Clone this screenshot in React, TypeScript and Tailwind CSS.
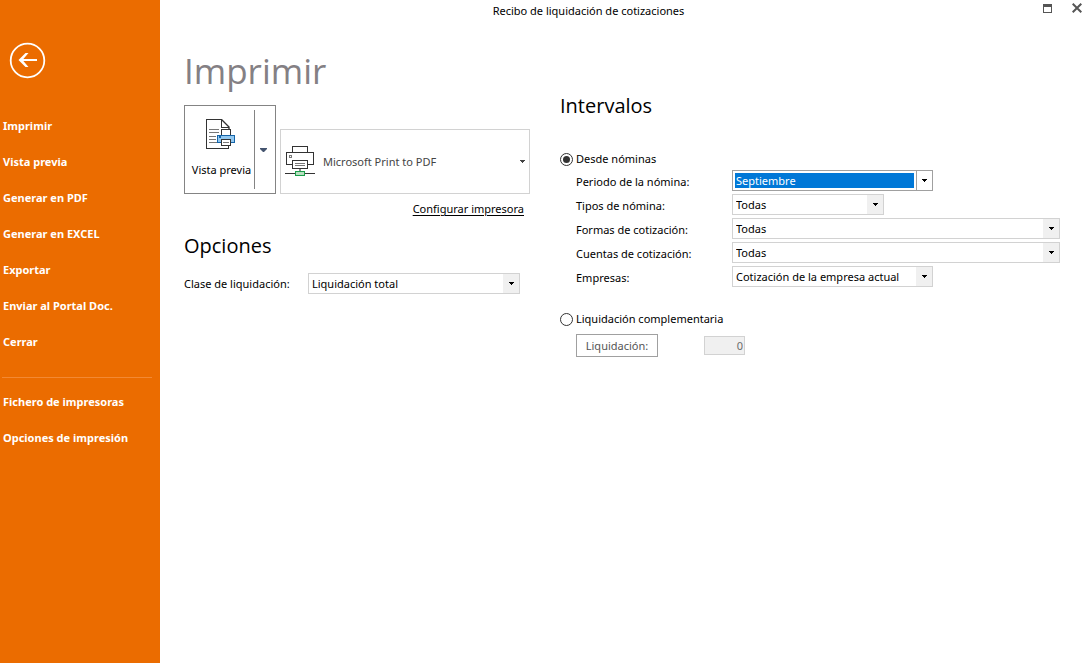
import { useState } from 'react';
import type { ReactNode } from 'react';

const mainActions = [
  'Imprimir',
  'Vista previa',
  'Generar en PDF',
  'Generar en EXCEL',
  'Exportar',
  'Enviar al Portal Doc.',
  'Cerrar',
];

const settingsActions = ['Fichero de impresoras', 'Opciones de impresión'];

function Caret({ className = 'text-black' }: { className?: string }) {
  return (
    <svg
      className={className}
      width="5"
      height="3"
      viewBox="0 0 5 3"
      fill="currentColor"
      shapeRendering="crispEdges"
      aria-hidden="true"
    >
      <path d="M0 0h5v1H4v1H3v1H2V2H1V1H0z" />
    </svg>
  );
}

function SideButton({ children }: { children: ReactNode }) {
  return (
    <button
      type="button"
      className="flex h-9 w-full items-center px-[3px] text-left font-bold text-white"
    >
      {children}
    </button>
  );
}

interface SelectBoxProps {
  id: string;
  options: string[];
  width: string;
  active?: boolean;
}

function SelectBox({ id, options, width, active = false }: SelectBoxProps) {
  const [value, setValue] = useState(options[0]);

  return (
    <div
      className={`relative flex h-[21px] border bg-white ${width} ${
        active ? 'border-[#a0a0a0] p-0.5' : 'border-[#d2d2d2]'
      }`}
    >
      <select
        id={id}
        value={value}
        onChange={(e) => setValue(e.target.value)}
        className={`min-w-0 flex-1 appearance-none border-r-[16px] border-transparent bg-clip-padding outline-none ${
          active ? 'bg-[#0078d7] pl-px text-white' : 'pt-px pl-[3px] text-black'
        }`}
      >
        {options.map((o) => (
          <option key={o}>{o}</option>
        ))}
      </select>
      <span
        className={`pointer-events-none absolute inset-y-0 right-0 flex w-4 items-center justify-center ${
          active ? 'border-l border-[#a0a0a0] bg-white' : 'bg-[#f0f0f0]'
        }`}
      >
        <Caret />
      </span>
    </div>
  );
}

function Field({ label, ...select }: SelectBoxProps & { label: string }) {
  return (
    <div className="flex h-6 items-start">
      <label htmlFor={select.id} className="w-[156px] shrink-0 leading-6">
        {label}
      </label>
      <SelectBox {...select} />
    </div>
  );
}

function ModeRadio({
  label,
  checked,
  onSelect,
}: {
  label: string;
  checked: boolean;
  onSelect: () => void;
}) {
  return (
    <label className="flex h-5 items-center gap-[3px]">
      <input
        type="radio"
        name="modo"
        checked={checked}
        onChange={onSelect}
        className="size-[13px] appearance-none rounded-full border border-[#333333] bg-white bg-clip-content p-0.5 checked:bg-[#333333]"
      />
      {label}
    </label>
  );
}

function PreviewIcon() {
  return (
    <svg width="30" height="31" viewBox="0 0 30 31" fill="none" shapeRendering="crispEdges">
      <path d="M16.5 1.5h-15v29h22v-3" fill="#fff" stroke="#333" />
      <path d="M16.5 1.5v8h7" stroke="#333" />
      <path d="M16.5 1.5l7.5 7.5v2" stroke="#333" strokeWidth="1.4" shapeRendering="auto" />
      <path d="M4 11.5h10M4 14.5h10M4 18.5h7M4 21.5h7M4 24.5h8" stroke="#777" />
      <path d="M16.5 11.5h9v6h-9z" fill="#fff" stroke="#333" />
      <path d="M12.5 17.5h17v7h-17z" fill="#92c8f0" stroke="#1464a8" />
      <path d="M14 18h2v2h-2z" fill="#1464a8" />
      <path d="M16.5 21.5h9v6h-9z" fill="#fff" stroke="#333" />
      <path d="M18 24.5h6" stroke="#777" />
    </svg>
  );
}

function PrinterIcon() {
  return (
    <svg width="30" height="31" viewBox="0 0 30 31" fill="none" shapeRendering="crispEdges">
      <path d="M7.5.5h15v6h-15z" fill="#fff" stroke="#333" />
      <path d="M1.5 6.5h27v12h-27z" fill="#fff" stroke="#333" />
      <path d="M4.5 9.5h2v2h-2z" stroke="#777" />
      <path d="M7.5 14.5h15v8h-15z" fill="#fff" stroke="#333" />
      <path d="M10 17.5h10M10 19.5h10" stroke="#777" />
      <path d="M0 27.5h30" stroke="#333" />
      <path d="M15 23v2" stroke="#888" strokeWidth="2" />
      <path d="M10.5 25.5h9v4h-9z" fill="#b8e0c0" stroke="#1b9e4b" />
    </svg>
  );
}

function Sidebar() {
  return (
    <aside className="w-40 shrink-0 bg-[#eb6c00] pt-[42px]">
      <button type="button" aria-label="Volver" className="ml-[9px] block">
        <svg width="37" height="37" viewBox="0 0 37 37" fill="none" stroke="#fff">
          <circle cx="18.5" cy="18.5" r="16.8" strokeWidth="1.8" />
          <path d="M28 18H11" strokeWidth="2" />
          <path d="M9.5 18l7-7h3l-6 7 6 7h-3z" fill="#fff" stroke="none" />
        </svg>
      </button>
      <nav className="mt-[29px]">
        {mainActions.map((a) => (
          <SideButton key={a}>{a}</SideButton>
        ))}
        <hr className="mt-[17px] mr-2 mb-1.5 ml-0.5 border-[#f38933]" />
        {settingsActions.map((a) => (
          <SideButton key={a}>{a}</SideButton>
        ))}
      </nav>
    </aside>
  );
}

function TitleBar() {
  return (
    <header className="flex h-[22px] items-start">
      <h1 className="flex-1 pt-[3px] text-center">Recibo de liquidación de cotizaciones</h1>
      <div className="flex h-4 w-[72px] items-center gap-5 pl-[26px]">
        <button type="button" aria-label="Maximizar">
          <svg width="9" height="9" viewBox="0 0 9 9" fill="none" shapeRendering="crispEdges">
            <path d="M.5.5h8v8h-8z" stroke="#555" />
            <path d="M0 0h9v3H0z" fill="#555" />
          </svg>
        </button>
        <button type="button" aria-label="Cerrar ventana">
          <svg width="10" height="10" viewBox="0 0 10 10" stroke="#555" strokeWidth="2">
            <path d="M.7.7l8.6 8.6M9.3.7L.7 9.3" />
          </svg>
        </button>
      </div>
    </header>
  );
}

function PrintPanel() {
  return (
    <section className="w-[346px] shrink-0">
      <h2 className="pt-6 font-['Open_Sans',sans-serif] text-[35px] leading-[50px] text-[#848084]">
        Imprimir
      </h2>
      <div className="mt-[9px] flex items-end gap-1">
        <div className="flex h-[89px] w-[92px] shrink-0 border border-[#848484]">
          <button
            type="button"
            className="my-1 flex w-[70px] flex-col items-center gap-[13px] border-r border-[#848484] pt-2 whitespace-nowrap"
          >
            <PreviewIcon />
            <span className="pl-1">Vista previa</span>
          </button>
          <button
            type="button"
            aria-label="Más opciones de vista previa"
            className="flex w-[17px] items-center justify-center"
          >
            <svg width="7" height="4" viewBox="0 0 7 4" fill="#44546f" aria-hidden="true">
              <path d="M0 0h7v1L4 4H3L0 1z" />
            </svg>
          </button>
        </div>
        <button
          type="button"
          className="flex h-[65px] flex-1 items-center border border-[#d2d2d2] px-1 text-[#444444]"
        >
          <PrinterIcon />
          <span className="ml-2 flex-1 text-left">Microsoft Print to PDF</span>
          <Caret className="text-[#444444]" />
        </button>
      </div>
      <div className="mt-[7px] pr-1.5 text-right">
        <a href="#configurar" className="underline underline-offset-2">
          Configurar impresora
        </a>
      </div>
      <h2 className="mt-[15px] font-['Open_Sans',sans-serif] text-[20px] leading-7">Opciones</h2>
      <div className="mt-[13px] flex items-center">
        <label htmlFor="clase" className="w-[124px] shrink-0">
          Clase de liquidación:
        </label>
        <SelectBox id="clase" options={['Liquidación total']} width="w-[212px]" />
      </div>
    </section>
  );
}

function IntervalPanel() {
  const [mode, setMode] = useState('nominas');

  return (
    <section className="min-w-0 flex-1 pt-[70px]">
      <h2 className="font-['Open_Sans',sans-serif] text-[20px] leading-7">Intervalos</h2>
      <div className="mt-[29px]">
        <ModeRadio
          label="Desde nóminas"
          checked={mode === 'nominas'}
          onSelect={() => setMode('nominas')}
        />
        <div className="pt-px pl-4">
          <Field id="periodo" label="Periodo de la nómina:" options={['Septiembre']} width="w-[201px]" active />
          <Field id="tipos" label="Tipos de nómina:" options={['Todas']} width="w-[152px]" />
          <Field id="formas" label="Formas de cotización:" options={['Todas']} width="flex-1" />
          <Field id="cuentas" label="Cuentas de cotización:" options={['Todas']} width="flex-1" />
          <Field
            id="empresas"
            label="Empresas:"
            options={['Cotización de la empresa actual']}
            width="w-[201px]"
          />
        </div>
      </div>
      <div className="mt-[19px]">
        <ModeRadio
          label="Liquidación complementaria"
          checked={mode === 'complementaria'}
          onSelect={() => setMode('complementaria')}
        />
        <div className="mt-[5px] flex items-center gap-[46px] pl-4">
          <button type="button" className="h-[23px] w-[82px] border border-[#a0a0a0] text-[#555555]">
            Liquidación:
          </button>
          <input
            type="text"
            aria-label="Número de liquidación"
            value="0"
            readOnly
            disabled={mode === 'nominas'}
            className="h-[19px] w-[41px] border border-[#d2d2d2] bg-[#f0f0f0] pr-px text-right text-[#6d6d6d]"
          />
        </div>
      </div>
    </section>
  );
}

export default function App() {
  return (
    <div className="flex min-h-screen bg-white font-['Noto_Sans','Open_Sans',sans-serif] text-[11px] leading-4 text-black">
      <Sidebar />
      <div className="min-w-0 flex-1">
        <TitleBar />
        <main className="flex gap-[30px] pr-[29px] pl-6">
          <PrintPanel />
          <IntervalPanel />
        </main>
      </div>
    </div>
  );
}
